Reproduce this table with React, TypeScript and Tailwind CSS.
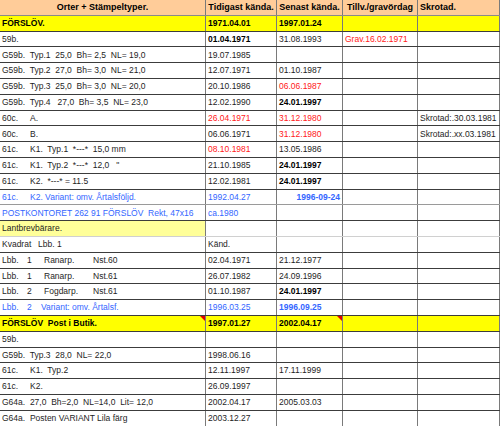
import React from "react";

type Cell = { v?: React.ReactNode; cls?: string };

const RED = "text-[#ff2020]";
const BLUE = "text-[#3366ff]";

function Tri() {
  return (
    <span className="absolute top-0 right-0 w-0 h-0 border-t-[5px] border-l-[5px] border-t-[#e00000] border-l-transparent" />
  );
}

function Row({ cells, bg = "bg-white", line = "border-[#3c3c3c]", first = "" }: { cells: Cell[]; bg?: string; line?: string; first?: string }) {
  const widths = ["w-[206px]", "w-[71px]", "w-[66px]", "w-[75px]", "w-[82px]"];
  return (
    <div className={`flex h-[15.8px] border-b ${line} ${bg}`}>
      {widths.map((w, i) => {
        const c = cells[i] || {};
        return (
          <div
            key={i}
            className={`relative ${w} shrink-0 flex items-center px-[2px] border-r border-[#7a7a7a] overflow-hidden whitespace-pre ${i === 0 ? first : ""} ${c.cls || ""}`}
          >
            {c.v}
          </div>
        );
      })}
    </div>
  );
}

export default function App() {
  const b = "font-bold text-black";
  return (
    <div className="w-[500px] h-[426px] overflow-hidden bg-white text-[8.5px] leading-none text-[#1e1e1e] font-['Liberation_Sans',Arial,sans-serif]">
      {/* Header */}
      <div className="flex h-[15.8px] border-b border-[#8a8a8a] bg-[#ffcc99] text-[9px] font-bold text-black">
        <div className="w-[206px] shrink-0 flex items-center justify-center border-r border-[#7a7a7a]">Orter + Stämpeltyper.</div>
        <div className="w-[71px] shrink-0 flex items-center justify-center border-r border-[#7a7a7a] whitespace-nowrap">Tidigast kända.</div>
        <div className="w-[66px] shrink-0 flex items-center justify-center border-r border-[#7a7a7a] whitespace-nowrap">Senast kända.</div>
        <div className="w-[75px] shrink-0 flex items-center justify-center border-r border-[#7a7a7a] whitespace-nowrap">Tillv./gravördag</div>
        <div className="w-[82px] shrink-0 flex items-center px-[2px] border-r border-[#7a7a7a]">Skrotad.</div>
      </div>

      <Row bg="bg-[#ffff00]" cells={[{ v: "FÖRSLÖV.", cls: b }, { v: "1971.04.01", cls: b }, { v: "1997.01.24", cls: b }]} />
      <Row cells={[{ v: "59b." }, { v: "01.04.1971", cls: b }, { v: "31.08.1993" }, { v: "Grav.16.02.1971", cls: RED }]} />
      <Row cells={[{ v: "G59b.  Typ.1  25,0  Bh= 2,5  NL= 19,0" }, { v: "19.07.1985" }]} />
      <Row cells={[{ v: "G59b.  Typ.2  27,0  Bh= 3,0  NL= 21,0" }, { v: "12.07.1971" }, { v: "01.10.1987" }]} />
      <Row cells={[{ v: "G59b.  Typ.3  25,0  Bh= 3,0  NL= 20,0" }, { v: "20.10.1986" }, { v: "06.06.1987", cls: RED }]} />
      <Row cells={[{ v: "G59b.  Typ.4   27,0  Bh= 3,5  NL= 23,0" }, { v: "12.02.1990" }, { v: "24.01.1997", cls: b }]} />
      <Row
        cells={[
          { v: <><span className="inline-block w-[28px]">60c.</span>A.</> },
          { v: "26.04.1971", cls: RED },
          { v: "31.12.1980", cls: RED },
          {},
          { v: "Skrotad:.30.03.1981" },
        ]}
      />
      <Row
        cells={[
          { v: <><span className="inline-block w-[28px]">60c.</span>B.</> },
          { v: "06.06.1971" },
          { v: "31.12.1980", cls: RED },
          {},
          { v: "Skrotad:.xx.03.1981" },
        ]}
      />
      <Row cells={[{ v: <><span className="inline-block w-[28px]">61c.</span>K1.  Typ.1  *---*  15,0 mm</> }, { v: "08.10.1981", cls: RED }, { v: "13.05.1986" }]} />
      <Row cells={[{ v: <><span className="inline-block w-[28px]">61c.</span>K1.  Typ.2  *---*  12,0   "</> }, { v: "21.10.1985" }, { v: "24.01.1997", cls: b }]} />
      <Row cells={[{ v: <><span className="inline-block w-[28px]">61c.</span>K2.  *---* = 11.5</> }, { v: "12.02.1981" }, { v: "24.01.1997", cls: b }]} />
      <Row
        line="border-[#9a9a9a]"
        cells={[
          { v: <><span className="inline-block w-[28px]">61c.</span>K2. Variant: omv. Årtalsföljd.</>, cls: BLUE },
          { v: "1992.04.27", cls: BLUE },
          { v: "1996-09-24", cls: `${BLUE} font-bold justify-end` },
        ]}
      />
      <Row cells={[{ v: "POSTKONTORET 262 91 FÖRSLÖV  Rekt, 47x16", cls: BLUE }, { v: "ca.1980", cls: BLUE }]} />
      <Row line="border-[#d0d0d0]" first="bg-[#ffff99]" cells={[{ v: "Lantbrevbärare." }]} />
      <Row cells={[{ v: <><span className="inline-block w-[36px]">Kvadrat</span>Lbb. 1</> }, { v: "Känd." }]} />
      <Row
        cells={[
          { v: <><span className="inline-block w-[25px]">Lbb.</span><span className="inline-block w-[17px]">1</span><span className="inline-block w-[49px]">Ranarp.</span>Nst.60</> },
          { v: "02.04.1971" },
          { v: "21.12.1977" },
        ]}
      />
      <Row
        cells={[
          { v: <><span className="inline-block w-[25px]">Lbb.</span><span className="inline-block w-[17px]">1</span><span className="inline-block w-[49px]">Ranarp.</span>Nst.61</> },
          { v: "26.07.1982" },
          { v: "24.09.1996" },
        ]}
      />
      <Row
        cells={[
          { v: <><span className="inline-block w-[25px]">Lbb.</span><span className="inline-block w-[17px]">2</span><span className="inline-block w-[49px]">Fogdarp.</span>Nst.61</> },
          { v: "01.10.1987" },
          { v: "24.01.1997", cls: b },
        ]}
      />
      <Row
        cells={[
          { v: <><span className="inline-block w-[25px]">Lbb.</span><span className="inline-block w-[14px]">2</span>Variant: omv. Årtalsf.</>, cls: BLUE },
          { v: "1996.03.25", cls: BLUE },
          { v: "1996.09.25", cls: `${BLUE} font-bold` },
        ]}
      />
      <Row
        bg="bg-[#ffff00]"
        cells={[
          { v: <>FÖRSLÖV  Post i Butik.<Tri /></>, cls: b },
          { v: "1997.01.27", cls: b },
          { v: <>2002.04.17<Tri /></>, cls: b },
        ]}
      />
      <Row cells={[{ v: "59b." }]} />
      <Row cells={[{ v: "G59b.  Typ.3  28,0  NL= 22,0" }, { v: "1998.06.16" }]} />
      <Row cells={[{ v: <><span className="inline-block w-[28px]">61c.</span>K1.  Typ.2</> }, { v: "12.11.1997" }, { v: "17.11.1999" }]} />
      <Row cells={[{ v: <><span className="inline-block w-[28px]">61c.</span>K2.</> }, { v: "26.09.1997" }]} />
      <Row cells={[{ v: "G64a.  27,0  Bh=2,0  NL=14,0  Lit= 12,0" }, { v: "2002.04.17" }, { v: "2005.03.03" }]} />
      <Row cells={[{ v: "G64a.  Posten VARIANT Lila färg" }, { v: "2003.12.27" }]} />
    </div>
  );
}
